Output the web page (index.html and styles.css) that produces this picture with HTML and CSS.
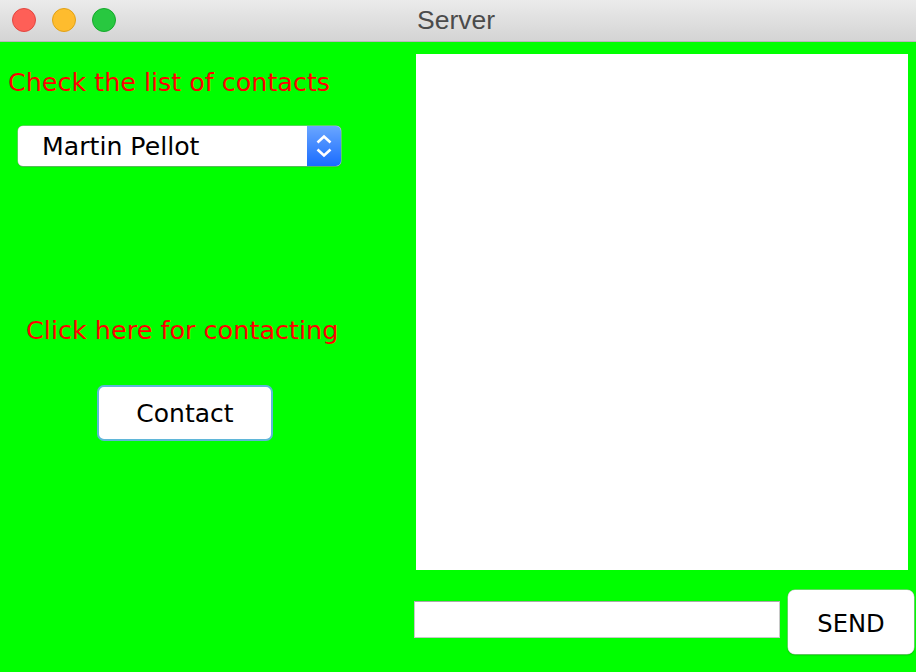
FILE: index.html
```html
<!DOCTYPE html>
<html>
<head>
<meta charset="utf-8">
<link rel="stylesheet" href="styles.css">
</head>
<body>
<div class="window">
  <div class="titlebar">
    <div class="lights">
      <span class="light red"></span>
      <span class="light yellow"></span>
      <span class="light green"></span>
    </div>
    <div class="title">Server</div>
  </div>
  <div class="content">
    <div class="left">
      <div class="label label-top">Check the list of contacts</div>
      <div class="combo">
        <span class="combo-text">Martin Pellot</span>
        <span class="combo-arrow">
          <svg width="20" height="30" viewBox="0 0 20 30"><path d="M3.5 11.5 L10 5.5 L16.5 11.5" fill="none" stroke="#fff" stroke-width="2.6"/><path d="M3.5 18.5 L10 24.5 L16.5 18.5" fill="none" stroke="#fff" stroke-width="2.6"/></svg>
        </span>
      </div>
      <div class="label label-mid">Click here for contacting</div>
      <div class="btn-wrap"><button class="contact-btn">Contact</button></div>
    </div>
    <div class="right">
      <div class="textarea"></div>
      <div class="send-row">
        <div class="input"></div>
        <button class="send-btn">SEND</button>
      </div>
    </div>
  </div>
</div>
</body>
</html>
```
FILE: styles.css
```css
html, body {
  margin: 0;
  padding: 0;
}
body {
  width: 916px;
  height: 672px;
  overflow: hidden;
  font-family: "DejaVu Sans", Verdana, sans-serif;
}
.window {
  width: 916px;
  height: 672px;
  display: flex;
  flex-direction: column;
  background: #00ff00;
}
.titlebar {
  height: 41px;
  background: linear-gradient(#ebebeb, #d4d4d4);
  border-bottom: 1px solid #b8b8b8;
  position: relative;
  display: flex;
  align-items: center;
  justify-content: center;
  flex-shrink: 0;
}
.lights {
  position: absolute;
  left: 12px;
  top: 8px;
  display: flex;
  gap: 16px;
}
.light {
  width: 24px;
  height: 24px;
  border-radius: 50%;
  box-sizing: border-box;
}
.light.red { background: #fe5f57; border: 1px solid #e2463f; }
.light.yellow { background: #febc2e; border: 1px solid #e1a116; }
.light.green { background: #28c840; border: 1px solid #15a92b; }
.title {
  font-family: "Liberation Sans", Arial, sans-serif;
  font-size: 26.5px;
  color: #4b4b4b;
  margin-left: -4px;
}
.content {
  flex: 1;
  display: flex;
}
.left {
  width: 414px;
  flex-shrink: 0;
  display: flex;
  flex-direction: column;
}
.label {
  color: #ff0000;
  font-size: 25.4px;
  line-height: 30px;
  white-space: nowrap;
}
.label-top {
  margin: 25px 0 0 8px;
}
.combo {
  margin: 29px 0 0 18px;
  width: 323px;
  height: 40px;
  box-sizing: border-box;
  background: #fff;
  border-radius: 5px;
  box-shadow: 0 0 0 0.5px #b0b0b0, 0 1px 1px rgba(0,0,0,0.25);
  display: flex;
  align-items: center;
  overflow: hidden;
}
.combo-text {
  flex: 1;
  padding-left: 24px;
  font-size: 25.2px;
  color: #000;
}
.combo-arrow {
  width: 34px;
  height: 40px;
  background: linear-gradient(#6aa6ff, #1a6cff);
  display: flex;
  align-items: center;
  justify-content: center;
}
.label-mid {
  margin: 149px 0 0 26px;
  font-size: 25.5px;
}
.btn-wrap {
  margin: 40px 0 0 97px;
}
.contact-btn, .send-btn {
  font-family: "DejaVu Sans", Verdana, sans-serif;
  background: #fff;
  color: #000;
  padding: 0;
  cursor: default;
}
.contact-btn {
  width: 176px;
  height: 56px;
  box-sizing: border-box;
  border: 2px solid #5fb6d9;
  border-radius: 7px;
  font-size: 25px;
}
.right {
  flex: 1;
  display: flex;
  flex-direction: column;
}
.textarea {
  margin: 12px 8px 0 2px;
  height: 516px;
  background: #fff;
}
.send-row {
  margin-top: 20px;
  display: flex;
  align-items: center;
  gap: 8px;
}
.input {
  width: 366px;
  height: 37px;
  margin-top: -6px;
  box-sizing: border-box;
  background: #fff;
  border: 1px solid #c8c8c8;
  border-top-color: #a8a8a8;
}
.send-btn {
  width: 126px;
  height: 64px;
  padding-top: 3px;
  border: none;
  border-radius: 7px;
  box-shadow: 0 0 0 0.5px #c0c0c0, 0 1px 2px rgba(0,0,0,0.3);
  font-size: 24.2px;
}
```
